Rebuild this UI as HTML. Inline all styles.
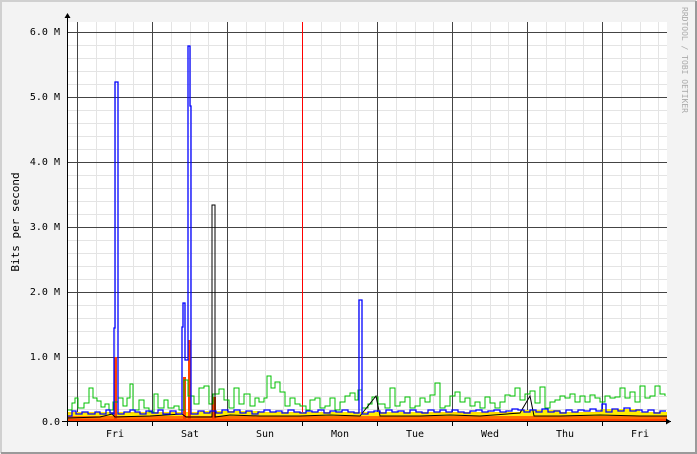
<!DOCTYPE html>
<html><head><style>
body{margin:0;background:#f3f3f3;}
svg{display:block;font-family:"DejaVu Sans Mono","Liberation Mono",monospace;}
</style></head><body>
<svg width="697" height="454" xmlns="http://www.w3.org/2000/svg">
<rect x="0" y="0" width="697" height="454" fill="#f3f3f3"/>
<path d="M1 453V1H696" fill="none" stroke="#d0d0d0" stroke-width="2"/>
<path d="M1 453H696V1" fill="none" stroke="#9a9a9a" stroke-width="2"/>
<rect x="67" y="22" width="600" height="400" fill="#fff"/>
<g stroke="#e4e4e4" stroke-width="1">
<path d="M67 409.5H667M67 396.5H667M67 383.5H667M67 370.5H667M67 344.5H667M67 331.5H667M67 318.5H667M67 305.5H667M67 279.5H667M67 266.5H667M67 253.5H667M67 240.5H667M67 214.5H667M67 201.5H667M67 188.5H667M67 175.5H667M67 149.5H667M67 136.5H667M67 123.5H667M67 110.5H667M67 84.5H667M67 71.5H667M67 58.5H667M67 45.5H667"/>
<path d="M96.5 22V422M115.5 22V422M133.5 22V422M171.5 22V422M190.5 22V422M208.5 22V422M246.5 22V422M265.5 22V422M283.5 22V422M321.5 22V422M340.5 22V422M358.5 22V422M396.5 22V422M415.5 22V422M433.5 22V422M471.5 22V422M490.5 22V422M508.5 22V422M546.5 22V422M565.5 22V422M583.5 22V422M621.5 22V422M640.5 22V422M658.5 22V422"/>
</g>
<g stroke="#444" stroke-width="1">
<path d="M67 357.5H667M67 292.5H667M67 227.5H667M67 162.5H667M67 97.5H667M67 32.5H667"/>
<path d="M77.5 22V422M152.5 22V422M227.5 22V422M377.5 22V422M452.5 22V422M527.5 22V422M602.5 22V422"/>
</g>
<path d="M302.5 22V422" stroke="#f00"/>
<rect x="67" y="412" width="600" height="10" fill="#ffdd00"/>
<path d="M67 422V414H100V412H130V414H200V411H260V413H330V412H420V414H520V410H560V413H600V409H640V412H667V422Z" fill="#ffee00"/>
<rect x="67" y="416" width="600" height="6" fill="#ff7000"/>
<rect x="67" y="419" width="600" height="3" fill="#ff4000"/>
<path d="M114 422V357H117V422Z M183 422V377H186V422Z M188 422V340H191V422Z M212 422V397H216V422Z" fill="#ff4000"/>
<path fill="none" stroke="#00c000" stroke-width="1" d="M67 410H72V403H75V398H78V408H84V403H89V388H93V398H97V401H101V407H105V404H109V410H113V402H118V398H123V406H127V398H130V384H133V410H139V400H144V408H149V412H154V394H158V408H164V400H168V408H174V406H179V410H184V380H188V396H194V404H199V388H204V386H209V404H213V394H219V389H224V400H229V408H234V388H239V404H244V394H250V406H255V398H259V402H264V398H267V376H271V388H275V382H280V392H285V406H290V398H295V404H300V406H306V410H310V400H315V398H320V408H325V406H330V398H335V410H340V402H345V396H350V393H355V400H358V390H362V408H368V404H372V397H378V404H385V408H390V388H395V406H400V402H405V397H410V408H415V406H420V398H425V402H430V395H435V383H440V408H445V406H450V396H455V392H460V402H465V398H470V406H475V402H480V408H485V397H490V403H495V408H500V402H505V395H510V396H515V388H520V400H525V394H530V391H535V403H540V387H545V408H550V402H555V400H560V396H565V398H570V394H575V402H580V396H585V402H590V395H595V398H600V402H605V396H610V398H615V397H620V388H625V398H630V392H635V402H640V386H645V398H650V396H655V386H660V394H665V396"/>
<polyline fill="none" stroke="#000" stroke-width="1" points="67,418 100,417 112,414 115,417 150,416 182,414 186,417 212,417 212,205 215,205 215,417 230,415 260,416 300,416 330,415 360,416 376,396 380,416 420,416 450,415 480,416 520,413 530,396 534,416 560,416 600,415 640,416 667,416"/>
<path fill="none" stroke="#00f" stroke-width="1.3" d="M67 416H72V411H76V414H82V412H88V414H95V412H100V414H106V410H110V413H113V414H114V328H115V82H118V414H124V412H130V410H135V412H140V414H146V411H152V413H158V410H163V414H170V411H176V414H182V327H183V303H185V360H188V46H190V106H191V414H198V411H204V413H210V411H216V413H222V410H228V412H234V410H240V413H246V411H252V414H258V412H264V410H270V412H276V411H282V413H288V410H294V412H300V413H306V411H312V412H318V410H324V413H330V411H336V412H342V410H348V412H354V413H359V300H362V414H368V412H374V411H380V413H386V410H392V412H398V411H404V413H410V410H416V412H422V413H428V410H434V412H440V410H446V412H452V410H458V412H464V413H470V411H476V410H482V412H488V411H494V410H500V412H506V411H512V409H518V410H524V412H530V410H536V412H542V409H548V412H554V411H560V413H566V410H572V412H578V410H584V411H590V409H596V411H602V404H606V412H612V409H618V411H624V408H630V411H636V410H642V412H648V410H654V413H660V411H666"/>
<path d="M67.5 17V426M62 421.5H671" stroke="#000" stroke-width="1"/>
<path d="M64.5 18L67.5 13L70.5 18Z M666 418.5L671 421.5L666 424.5Z" fill="#000"/>
<g stroke="#000"><path d="M77.5 422V426M152.5 422V426M227.5 422V426M302.5 422V426M377.5 422V426M452.5 422V426M527.5 422V426M602.5 422V426"/></g>
<g font-size="10" fill="#000" text-anchor="end">
<text x="60" y="425">0.0</text>
<text x="60" y="360">1.0 M</text>
<text x="60" y="295">2.0 M</text>
<text x="60" y="230">3.0 M</text>
<text x="60" y="165">4.0 M</text>
<text x="60" y="100">5.0 M</text>
<text x="60" y="35">6.0 M</text>
</g>
<g font-size="10" fill="#000" text-anchor="middle">
<text x="115" y="437">Fri</text><text x="190" y="437">Sat</text><text x="265" y="437">Sun</text><text x="340" y="437">Mon</text><text x="415" y="437">Tue</text><text x="490" y="437">Wed</text><text x="565" y="437">Thu</text><text x="640" y="437">Fri</text>
</g>
<text transform="translate(19,222) rotate(-90)" font-size="11" text-anchor="middle" fill="#000">Bits per second</text>
<text transform="translate(682,60) rotate(90)" font-size="8" text-anchor="middle" fill="#aaa">RRDTOOL / TOBI OETIKER</text>
</svg>
</body></html>
